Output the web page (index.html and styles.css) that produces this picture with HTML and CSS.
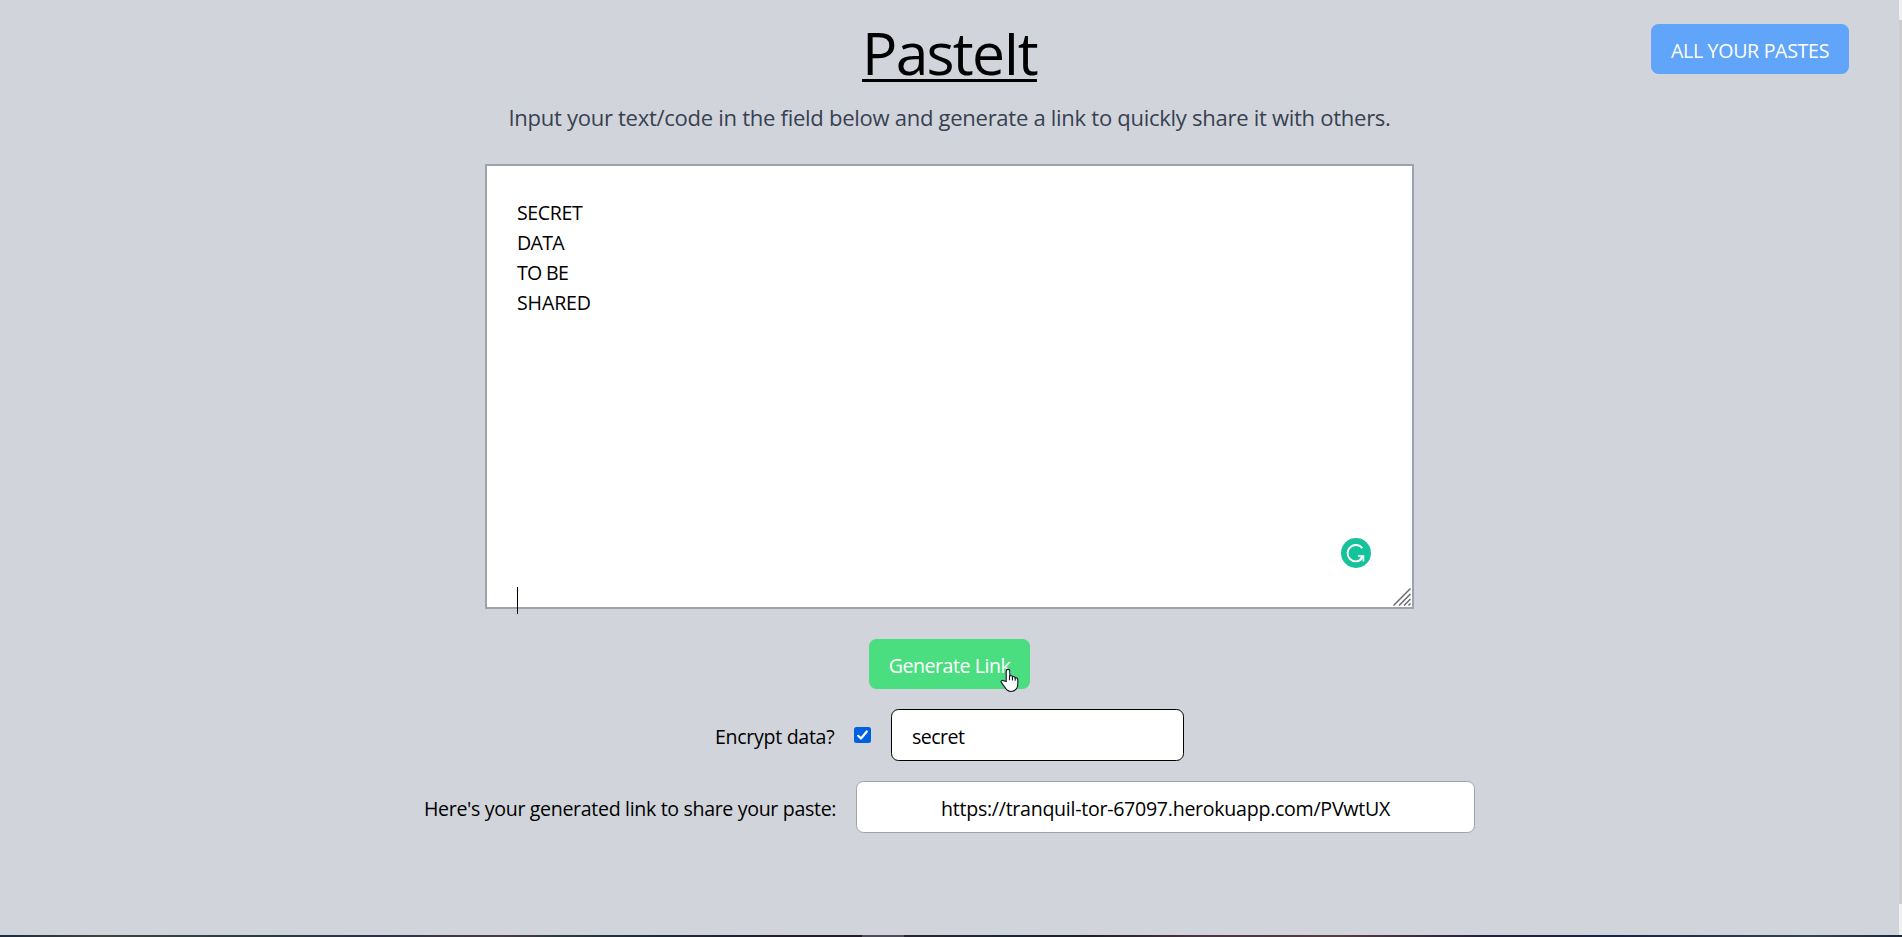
FILE: index.html
```html
<!DOCTYPE html>
<html lang="en">
<head>
<meta charset="utf-8">
<title>PasteIt</title>
<link rel="stylesheet" href="styles.css">
</head>
<body>
<div class="page">
  <div class="content">
    <header class="header">
      <h1 class="title">PasteIt</h1>
      <p class="subtitle">Input your text/code in the field below and generate a link to quickly share it with others.</p>
      <a class="btn btn-blue">ALL YOUR PASTES</a>
    </header>
    <main class="main">
      <div class="editor">
        <div class="editor-text">SECRET<br><span class="tight">DATA</span><br><span class="tight">TO BE</span><br><span class="loose">SHARED</span></div>
        <span class="caret"></span>
        <svg class="assistant" viewBox="0 0 30 30"><circle cx="15" cy="15" r="15" fill="#15c39a"/><path d="M21.300 10.200A8.200 8.200 0 1 0 20.600 21" fill="none" stroke="#fff" stroke-width="1.900"/><path d="M17 18h5.400v5.600M22 18.400l-3 3" fill="none" stroke="#fff" stroke-width="1.700"/></svg>
        <svg class="grip" viewBox="0 0 18 18"><path d="M.5 17.500l17-17M6 17.500L17.500 6M11 17.500l6.500-6.500M15.500 17.500l2-2" stroke="#6b6b6b" stroke-width="1.500" fill="none"/></svg>
      </div>
      <button class="btn btn-green">Generate Link
        <svg class="pointer" viewBox="0 0 19 25"><path d="M6.200 13.500V3.200a1.800 1.800 0 0 1 3.600 0v4.600c1.300-.5 2.400 0 2.700.9 1.200-.4 2.300 0 2.600 1 1.400-.4 2.700.4 2.700 2v4.500c0 3.600-2.200 7.300-6.800 7.300-3.200 0-4.900-1.600-6.300-4.400L1.300 14.400c-.8-1.500 1-2.700 2.300-1.600z" fill="#fff" stroke="#14142b" stroke-width="1.100"/><path d="M9.500 7.500v4.800M12.400 8.500v4M15.200 9.500v3.200" stroke="#14142b" stroke-width="1.100"/></svg>
      </button>
      <div class="row">
        <label class="encrypt-label">Encrypt data?</label>
        <svg class="check" viewBox="0 0 17 16"><rect width="17" height="16" rx="2.500" fill="#0060df"/><path d="M4.200 8.800l2.800 2.700 5.800-7" fill="none" stroke="#fff" stroke-width="2.200" stroke-linecap="round" stroke-linejoin="round"/></svg>
        <div class="field secret">secret</div>
      </div>
      <div class="row">
        <label class="share-label">Here's your generated link to share your paste:</label>
        <div class="field link">https://tranquil-tor-67097.herokuapp.com/PVwtUX</div>
      </div>
    </main>
  </div>
  <div class="scrollbar"><div class="thumb"></div></div>
  <div class="taskbar"></div>
</div>
</body>
</html>
```
FILE: styles.css
```css
* { box-sizing: border-box; }
body { margin: 0; background: #d1d5db; font: 19.6px/30px "Open Sans", sans-serif; color: #000; white-space: nowrap; }
.page { display: grid; grid-template: 935px 2px / 1899px 3px; height: 937px; overflow: hidden; }
.header { position: relative; display: flex; flex-direction: column; align-items: center; height: 164px; }
.title { margin: 0; padding-top: 1px; font-size: 58.8px; font-weight: 400; line-height: 102px; letter-spacing: -1.79px; text-decoration: underline; text-decoration-thickness: 3px; text-underline-offset: 4px; text-decoration-skip-ink: none; }
.subtitle { margin: -3px 0 0; font-size: 22.05px; color: #374151; line-height: 34px; letter-spacing: -0.29px; }
.btn { position: relative; border: 0; border-radius: 7.5px; height: 50px; padding: 4px 0 0; color: #fff; font: inherit; display: flex; align-items: center; justify-content: center; }
.btn-blue { position: absolute; left: 1651px; top: 24px; width: 198px; background: #60a5fa; letter-spacing: -0.32px; }
.btn-green { width: 161px; background: #4ade80; margin-top: 30px; letter-spacing: -0.46px; }
.pointer { position: absolute; left: 131px; top: 29px; width: 19px; height: 25px; }
.main { display: flex; flex-direction: column; align-items: center; }
.editor { position: relative; width: 929px; height: 445px; border: 2px solid #9ca3af; background: #fff; padding: 32px 30px; }
.editor-text { letter-spacing: -0.4px; }
.tight { letter-spacing: -0.7px; }
.loose { letter-spacing: -0.15px; }
.caret { position: absolute; left: 30px; top: 421px; width: 1px; height: 27px; background: #000; }
.assistant { position: absolute; left: 854px; top: 372px; width: 30px; }
.grip { position: absolute; right: 1px; bottom: 1px; width: 18px; }
.row { display: flex; align-items: center; margin-top: 20px; gap: 20px; }
.encrypt-label { width: 119px; padding-top: 3px; letter-spacing: -0.31px; }
.share-label { width: 412px; padding-top: 3px; letter-spacing: -0.34px; }
.field { background: #fff; border: 1px solid #000; border-radius: 7.5px; height: 52px; padding: 12px 20px 8px; }
.secret { width: 293px; letter-spacing: -0.55px; }
.link { width: 619px; text-align: center; border-color: #9ca3af; letter-spacing: -0.28px; }
.check { width: 17px; height: 16px; }
.scrollbar { background: #f0f0f0; padding-top: 20px; }
.thumb { height: 884px; background: #cdcdcd; }
.taskbar { grid-column: 1 / 3; background: linear-gradient(90deg, #1f2b3d 0, #40443f 100px, #2c3c40 250px, #2d3045 380px, #4a3c42 500px, #2b3a3f 560px, #1f2a3a 650px, #231d2b 780px, #231d2b 862px, #504b5a 862px, #504b5a 904px, #2a2431 904px, #1d2634 1000px, #221f29 1090px, #4a3642 1200px, #533d41 1340px, #25203a 1480px, #1a2540 1620px, #34444d 1810px, #1b2639 1902px); }
```
